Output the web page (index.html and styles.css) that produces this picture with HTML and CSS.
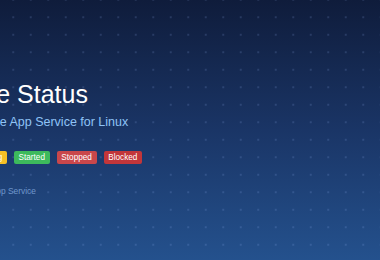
FILE: index.html
```html
<!DOCTYPE html>
<html>
<head>
<meta charset="utf-8">
<link rel="stylesheet" href="styles.css">
</head>
<body>
<div class="page">
  <div class="content">
    <h1 class="title">Site Status</h1>
    <p class="subtitle">Azure App Service for Linux</p>
    <div class="badges">
      <span class="badge badge-running">Running</span>
      <span class="badge badge-started">Started</span>
      <span class="badge badge-stopped">Stopped</span>
      <span class="badge badge-blocked">Blocked</span>
    </div>
    <p class="footer">Azure App Service</p>
  </div>
</div>
</body>
</html>
```
FILE: styles.css
```css
html, body {
  margin: 0;
  padding: 0;
}
body {
  font-family: "Liberation Sans", Arial, sans-serif;
}
.page {
  width: 380px;
  height: 260px;
  overflow: hidden;
  background:
    radial-gradient(circle, rgba(160, 190, 255, 0.16) 0.9px, transparent 1.4px) 4.5px 8.5px / 17.5px 17.5px,
    linear-gradient(180deg, #0f1c3b 0%, #1a3566 50%, #24518d 100%);
}
.content {
  display: flex;
  flex-direction: column;
  align-items: flex-start;
  padding-top: 80px;
  margin-left: -33px;
}
.title {
  margin: 0;
  font-size: 25px;
  line-height: 29px;
  font-weight: normal;
  color: #ffffff;
}
.subtitle {
  margin: 5px 0 0 7px;
  font-size: 12.5px;
  line-height: 16px;
  color: #8fc3f6;
}
.badges {
  display: flex;
  gap: 7px;
  margin-top: 21px;
}
.badge {
  display: inline-flex;
  align-items: center;
  height: 13px;
  padding: 0 4.7px;
  border-radius: 2px;
  font-size: 8.2px;
  color: #ffffff;
}
.badge-running { background: #f6c026; }
.badge-started { background: #3dba5c; }
.badge-stopped { background: #c9474b; }
.badge-blocked { background: #c2363a; }
.footer {
  margin: 22px 0 0;
  font-size: 8.4px;
  line-height: 10px;
  color: #6f97cc;
}
```
